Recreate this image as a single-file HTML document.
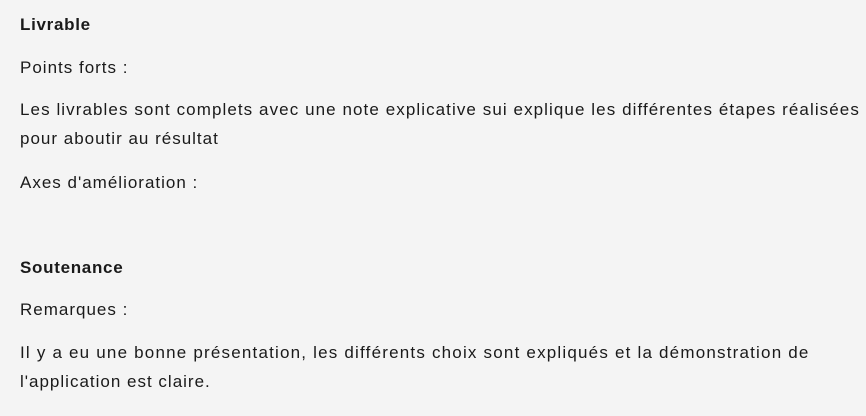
<!DOCTYPE html>
<html><head><meta charset="utf-8"><style>
html,body{margin:0;padding:0;background:#f4f4f4;width:866px;height:416px;overflow:hidden}
div{position:absolute;left:20px;white-space:nowrap;font-family:"Liberation Sans",sans-serif;font-size:17px;color:#1a1a1a;letter-spacing:1px;line-height:20px}
.b{font-weight:bold;letter-spacing:0.7px}
</style></head><body>
<div class="b" style="top:15px">Livrable</div>
<div style="top:58px">Points forts :</div>
<div style="top:100px;letter-spacing:1.08px">Les livrables sont complets avec une note explicative sui explique les différentes étapes réalisées</div>
<div style="top:129px">pour aboutir au résultat</div>
<div style="top:173px">Axes d'amélioration :</div>
<div class="b" style="top:258px">Soutenance</div>
<div style="top:300px">Remarques :</div>
<div style="top:343px;letter-spacing:1.2px">Il y a eu une bonne présentation, les différents choix sont expliqués et la démonstration de</div>
<div style="top:372px">l'application est claire.</div>
</body></html>
